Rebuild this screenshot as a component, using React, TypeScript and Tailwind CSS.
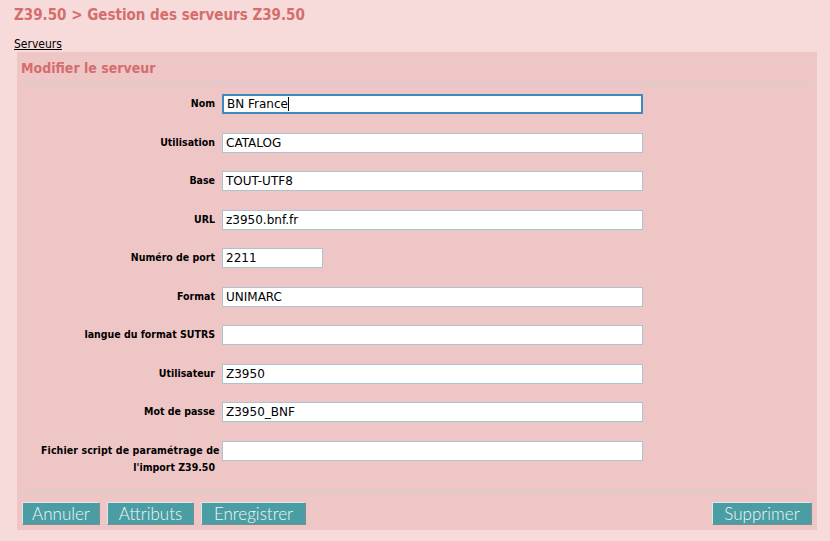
import React from "react";

interface Field {
  label: string;
  value: string;
  short?: boolean;
  focused?: boolean;
}

const fields: Field[] = [
  { label: "Nom", value: "BN France", focused: true },
  { label: "Utilisation", value: "CATALOG" },
  { label: "Base", value: "TOUT-UTF8" },
  { label: "URL", value: "z3950.bnf.fr" },
  { label: "Numéro de port", value: "2211", short: true },
  { label: "Format", value: "UNIMARC" },
  { label: "langue du format SUTRS", value: "" },
  { label: "Utilisateur", value: "Z3950" },
  { label: "Mot de passe", value: "Z3950_BNF" },
];

const cond = { fontFamily: '"DejaVu Sans Condensed", "DejaVu Sans", sans-serif' };

const btn =
  "h-[23px] bg-[#4a9da3] text-[#f1f8f8] text-[17px] leading-none font-light border border-t-[#dfe6e6] border-l-[#dfe6e6] border-b-[#7c8e90] border-r-[#7c8e90] flex items-center justify-center";

const Input: React.FC<{ field: Field }> = ({ field }) => (
  <div
    className={`h-[20px] bg-white flex items-center px-[3px] text-[12px] text-black ${
      field.short ? "w-[101px]" : "w-[421px]"
    } ${
      field.focused
        ? "border-2 border-[#3c89bf] rounded-[1px]"
        : "border border-[#aac4cd]"
    }`}
    style={{ fontFamily: '"DejaVu Sans", sans-serif' }}
  >
    <span>{field.value}</span>
    {field.focused && <span className="w-px h-[14px] bg-black" />}
  </div>
);

const App: React.FC = () => {
  return (
    <div
      className="w-[830px] h-[541px] bg-[#f7dbdb] pl-[14px] pt-[5px] overflow-hidden"
      style={cond}
    >
      {/* Header */}
      <h1 className="text-[15px] leading-[20px] font-bold text-[#d46d6c]">
        Z39.50 &gt; Gestion des serveurs Z39.50
      </h1>
      <div className="mt-[12px] text-[12px] leading-[14px] text-black">
        <a className="underline">Serveurs</a>
      </div>

      {/* Panel */}
      <div className="mt-[1px] ml-[3px] w-[800px] h-[478px] bg-[#efc6c6] px-[5px] pt-[6px]">
        <h2 className="text-[14px] leading-[20px] font-bold text-[#d46d6c] -ml-px">
          Modifier le serveur
        </h2>
        <div className="mt-[4px] h-px bg-[#c6d4d4]" />

        <div className="pt-[11px]">
          {fields.map((f) => (
            <div key={f.label} className="flex h-[38.5px]">
              <div className="w-[200px] pr-[7px] text-right text-[10.5px] leading-[17px] font-bold text-black pt-[1px]">
                {f.label}
              </div>
              <Input field={f} />
            </div>
          ))}
          <div className="flex h-[49px]">
            <div className="ml-[19px] w-[174px] text-right text-[10.5px] leading-[17px] font-bold text-black pt-[1px]">
              <span className="whitespace-nowrap tracking-[0.1px]">Fichier script de paramétrage de</span>
              <br />
              l'import Z39.50
            </div>
            <div className="ml-[7px]">
              <Input field={{ label: "", value: "" }} />
            </div>
          </div>
        </div>

        <div className="h-px bg-[#c6d4d4]" />

        {/* Actions */}
        <div
          className="mt-[11px] flex items-center gap-[7px]"
          style={{ fontFamily: 'Lato, "Open Sans", sans-serif' }}
        >
          <button className={`${btn} w-[78px]`}>Annuler</button>
          <button className={`${btn} w-[87px]`}>Attributs</button>
          <button className={`${btn} w-[105px]`}>Enregistrer</button>
          <button className={`${btn} w-[100px] ml-auto`}>Supprimer</button>
        </div>
      </div>
    </div>
  );
};

export default App;
